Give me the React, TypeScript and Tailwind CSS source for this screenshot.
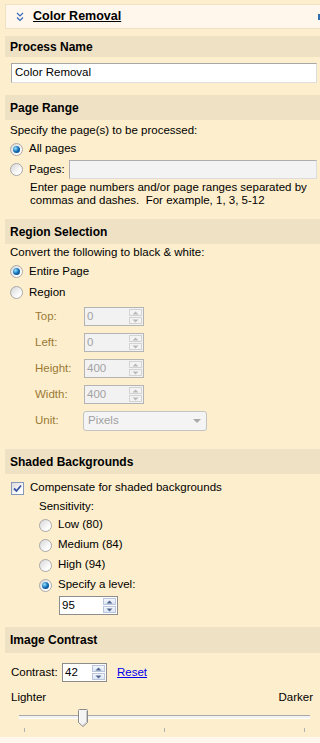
import React from "react";

const font = "font-['Liberation_Sans',Arial,sans-serif]";

function Radio({ checked }: { checked?: boolean }) {
  return (
    <span className="flex h-[13px] w-[13px] shrink-0 items-center justify-center rounded-full border border-[#a9a9a9] bg-[linear-gradient(135deg,#d6d6d6,#ffffff_75%)]">
      {checked && (
        <span className="h-[7px] w-[7px] rounded-full bg-[radial-gradient(circle_at_35%_35%,#8fe2ff,#0c63ae_55%,#073f74)]" />
      )}
    </span>
  );
}

function RadioRow({ label, checked, indent, h }: { label: string; checked?: boolean; indent: string; h: string }) {
  return (
    <div className={`flex items-center gap-[6px] ${indent} ${h}`}>
      <Radio checked={checked} />
      <span>{label}</span>
    </div>
  );
}

function Band({ title, h, mt }: { title: string; h: string; mt: string }) {
  return (
    <div className={`ml-[5px] flex items-center bg-[#efe1c4] pl-[5px] text-[12px] font-bold ${h} ${mt}`}>
      {title}
    </div>
  );
}

function SpinBtn({ up, disabled }: { up?: boolean; disabled?: boolean }) {
  const c = disabled ? "#b9b9b9" : "#4f6690";
  return (
    <span
      className={`flex flex-1 items-center justify-center border ${
        disabled ? "border-[#d3d3d3] bg-[#f3f3f3]" : "border-[#b9c6de] bg-[linear-gradient(#f4f7fc,#dde6f3)]"
      }`}
    >
      <svg width="7" height="4" viewBox="0 0 7 4">
        <path d={up ? "M0.5 3.5 L3.5 0.5 L6.5 3.5 Z" : "M0.5 0.5 L3.5 3.5 L6.5 0.5 Z"} fill={c} />
      </svg>
    </span>
  );
}

function Spin({ value, disabled, w }: { value: string; disabled?: boolean; w: string }) {
  return (
    <div
      className={`flex h-[19px] shrink-0 border ${w} ${
        disabled ? "border-[#b4b4b4] bg-[#f2f2f2] text-[#a3a3a3]" : "border-[#8d8d8d] bg-white text-black"
      }`}
    >
      <span className="flex-1 pl-[2px] leading-[17px]">{value}</span>
      <div className="flex w-[15px] flex-col gap-[1px] p-[1px]">
        <SpinBtn up disabled={disabled} />
        <SpinBtn disabled={disabled} />
      </div>
    </div>
  );
}

function Field({ label, value }: { label: string; value: string }) {
  return (
    <div className="flex h-[19px] items-center pl-[35px]">
      <span className="w-[49px] text-[#9b7a35]">{label}</span>
      <Spin value={value} disabled w="w-[60px]" />
    </div>
  );
}

function Slider() {
  return (
    <svg width="320" height="28" viewBox="0 0 320 28" className="block">
      <rect x="19" y="8" width="291" height="1" fill="#a9a9a9" />
      <rect x="19" y="9" width="291" height="2" fill="#f2f2f2" />
      <rect x="19" y="11" width="291" height="1" fill="#ffffff" />
      <path
        d="M78.5 3.5 Q78.5 2.5 79.5 2.5 L86.5 2.5 Q87.5 2.5 87.5 3.5 L87.5 15.5 L83 19.5 L78.5 15.5 Z"
        fill="#f4f4f4"
        stroke="#8a8a8a"
      />
      <path d="M79.5 4 L79.5 15" stroke="#ffffff" />
      <path d="M86.5 4 L86.5 15 L83 18" stroke="#c9c9c9" fill="none" />
      <rect x="24" y="21" width="1" height="4" fill="#b0b0b0" />
      <rect x="164" y="21" width="1" height="4" fill="#b0b0b0" />
      <rect x="304" y="21" width="1" height="4" fill="#b0b0b0" />
    </svg>
  );
}

export default function App() {
  return (
    <div
      className={`flex h-[743px] w-[320px] flex-col overflow-hidden bg-[#fdeecd] text-[11.5px] text-black *:shrink-0 ${font}`}
    >
      {/* task header */}
      <div className="ml-[5px] mt-[4px] flex h-[25px] items-center justify-between border border-r-0 border-[#f2e2c5] bg-[#fff6ec]">
        <div className="flex items-center">
          <svg width="8" height="10" viewBox="0 0 8 10" className="ml-[10px]">
            <path d="M1 1 L4 4 L7 1 M1 5.5 L4 8.5 L7 5.5" stroke="#3568bd" strokeWidth="1.2" fill="none" />
          </svg>
          <span className="ml-[9px] text-[12.5px] font-bold underline">Color Removal</span>
        </div>
        <span className="h-[6px] w-[2px] bg-[#2d6fb0]" />
      </div>

      <Band title="Process Name" h="h-[21px]" mt="mt-[7px]" />
      <div className="ml-[11px] mr-[3px] mt-[6px] flex h-[20px] items-center border border-[#a7a7a7] border-b-[#dedede] border-r-[#dedede] bg-white pl-[3px]">
        Color Removal
      </div>

      <Band title="Page Range" h="h-[25px]" mt="mt-[12px]" />
      <div className="mt-[2px] flex h-[18px] items-center pl-[10px]">Specify the page(s) to be processed:</div>
      <RadioRow label="All pages" checked indent="pl-[10px]" h="h-[18px]" />
      <div className="mt-[2px] flex h-[19px] items-center pl-[10px]">
        <Radio />
        <span className="ml-[6px] w-[40px]">Pages:</span>
        <span className="mr-[3px] h-[19px] flex-1 border border-[#aeaeae] border-b-[#dcdcdc] border-r-[#dcdcdc] bg-[#f3f3f3]" />
      </div>
      <div className="mt-[2px] pl-[30px] pr-[4px] leading-[13px]">
        Enter page numbers and/or page ranges separated by commas and dashes.&nbsp; For example, 1, 3, 5-12
      </div>

      <Band title="Region Selection" h="h-[25px]" mt="mt-[12px]" />
      <div className="flex h-[17px] items-center pl-[10px]">Convert the following to black &amp; white:</div>
      <RadioRow label="Entire Page" checked indent="pl-[10px]" h="h-[21px]" />
      <RadioRow label="Region" indent="pl-[10px]" h="h-[21px]" />
      <div className="mt-[4px] flex flex-col gap-[7px]">
        <Field label="Top:" value="0" />
        <Field label="Left:" value="0" />
        <Field label="Height:" value="400" />
        <Field label="Width:" value="400" />
        <div className="flex h-[20px] items-center pl-[35px]">
          <span className="w-[48px] text-[#9b7a35]">Unit:</span>
          <div className="flex h-[20px] w-[124px] items-center justify-between rounded-[3px] border border-[#c3c3c3] bg-[#f4f4f4] pl-[4px] pr-[5px] text-[#a0a0a0]">
            <span>Pixels</span>
            <svg width="8" height="4" viewBox="0 0 8 4">
              <path d="M0 0 L8 0 L4 4 Z" fill="#aaaaaa" />
            </svg>
          </div>
        </div>
      </div>

      <Band title="Shaded Backgrounds" h="h-[25px]" mt="mt-[18px]" />
      <div className="mt-[4px] flex h-[20px] items-center gap-[6px] pl-[11px]">
        <span className="flex h-[13px] w-[13px] items-center justify-center border border-[#8797b8] bg-[linear-gradient(135deg,#dcdcdc,#ffffff_75%)]">
          <svg width="9" height="9" viewBox="0 0 9 9">
            <path d="M1 4.5 L3.5 7 L8 1.5" stroke="#3a55a4" strokeWidth="1.8" fill="none" />
          </svg>
        </span>
        <span>Compensate for shaded backgrounds</span>
      </div>
      <div className="flex h-[17px] items-center pl-[39px]">Sensitivity:</div>
      <RadioRow label="Low (80)" indent="pl-[39px]" h="h-[20px]" />
      <RadioRow label="Medium (84)" indent="pl-[39px]" h="h-[20px]" />
      <RadioRow label="High (94)" indent="pl-[39px]" h="h-[20px]" />
      <RadioRow label="Specify a level:" checked indent="pl-[39px]" h="h-[20px]" />
      <div className="mt-[1px] flex pl-[59px]">
        <Spin value="95" w="w-[59px]" />
      </div>

      <Band title="Image Contrast" h="h-[26px]" mt="mt-[12px]" />
      <div className="mt-[10px] flex h-[19px] items-center pl-[11px]">
        <span className="w-[51px]">Contrast:</span>
        <Spin value="42" w="w-[45px]" />
        <span className="ml-[10px] text-[#0000ee] underline">Reset</span>
      </div>
      <div className="mt-[7px] flex h-[18px] items-center justify-between pl-[11px] pr-[7px]">
        <span>Lighter</span>
        <span>Darker</span>
      </div>
      <Slider />
      <div className="mt-[2px] h-[10px] bg-[#fff7ee]" />
    </div>
  );
}
